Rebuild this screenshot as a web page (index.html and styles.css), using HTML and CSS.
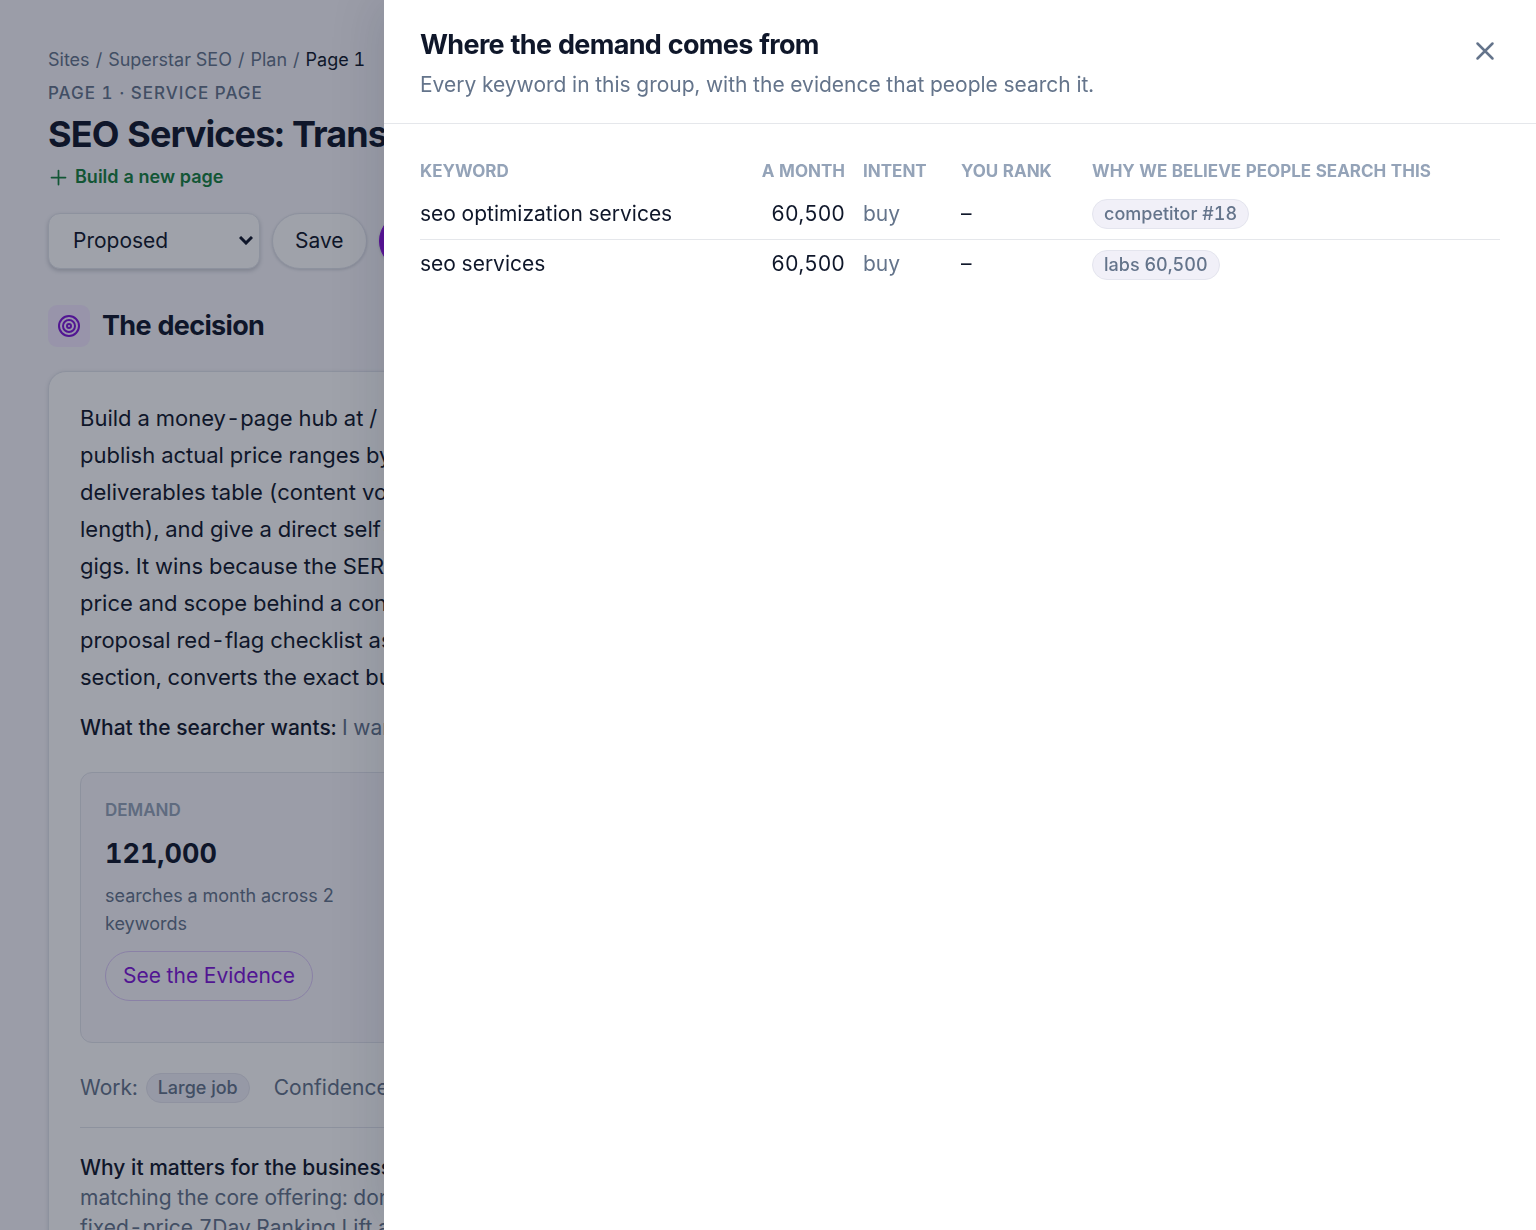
FILE: index.html
```html
<!DOCTYPE html>
<html lang="en">

<head>
    <meta charset="UTF-8">
    <meta name="viewport" content="width=device-width, initial-scale=1.0">
    <title>Page 1 - Superstar SEO</title>
    <link rel="stylesheet" href="styles.css">
</head>

<body>
    <main class="page">
        <nav class="breadcrumb" aria-label="Breadcrumb">
            <a href="#">Sites</a>
            <span>/</span>
            <a href="#">Superstar SEO</a>
            <span>/</span>
            <a href="#">Plan</a>
            <span>/</span>
            <span class="current">Page 1</span>
        </nav>
        <div class="eyebrow">Page 1 · Service page</div>
        <h1>SEO Services: Transparent</h1>
        <div class="build-type">
            <svg width="21" height="21" viewBox="0 0 24 24" fill="none" stroke="currentColor" stroke-width="2"
                stroke-linecap="round" stroke-linejoin="round">
                <path d="M4 12h16M12 4v16"></path>
            </svg>
            Build a new page
        </div>

        <form class="actions">
            <div class="select-wrap">
                <select class="status" aria-label="Status">
                    <option>Proposed</option>
                </select>
                <svg class="select-arrow" width="14" height="9" viewBox="0 0 14 9" fill="none" stroke="currentColor"
                    stroke-width="3">
                    <path d="M1 1l6 6 6-6"></path>
                </svg>
            </div>
            <button type="button" class="btn">Save</button>
            <button type="button" class="btn btn-primary">Approve</button>
        </form>

        <div class="section-title">
            <span class="section-icon">
                <svg width="24" height="24" viewBox="0 0 24 24" fill="none" stroke="currentColor" stroke-width="2">
                    <circle cx="12" cy="12" r="10"></circle>
                    <circle cx="12" cy="12" r="6"></circle>
                    <circle cx="12" cy="12" r="2"></circle>
                </svg>
            </span>
            <h2>The decision</h2>
        </div>

        <section class="card">
            <p class="lead">
                Build a money-page hub at /<br>
                publish actual price ranges by<br>
                deliverables table (content vol<br>
                length), and give a direct self-<br>
                gigs. It wins because the SERP<br>
                price and scope behind a cont<br>
                proposal red-flag checklist as<br>
                section, converts the exact bu
            </p>
            <p class="wants"><strong>What the searcher wants:</strong> I want</p>

            <div class="stat">
                <div class="stat-label">Demand</div>
                <div class="stat-value">121,000</div>
                <div class="stat-note">searches a month across 2<br>keywords</div>
                <button type="button" class="evidence">See the Evidence</button>
            </div>

            <div class="meta">
                <div class="meta-item">Work: <span class="tag">Large job</span></div>
                <div class="meta-item">Confidence:</div>
            </div>

            <p class="why">
                <strong>Why it matters for the business:</strong><br>
                matching the core offering: done<br>
                fixed-price 7Day Ranking Lift an
            </p>
        </section>
    </main>

    <div class="overlay"></div>

    <aside class="drawer" role="dialog" aria-labelledby="drawer-title">
        <header class="drawer-header">
            <div>
                <h2 id="drawer-title">Where the demand comes from</h2>
                <p>Every keyword in this group, with the evidence that people search it.</p>
            </div>
            <button type="button" class="close" aria-label="Close">
                <svg width="30" height="30" viewBox="0 0 24 24" fill="none" stroke="currentColor" stroke-width="2"
                    stroke-linecap="round">
                    <path d="M6 6l12 12M18 6L6 18"></path>
                </svg>
            </button>
        </header>
        <div class="drawer-body">
            <table>
                <colgroup>
                    <col>
                    <col class="col-month">
                    <col class="col-intent">
                    <col class="col-rank">
                    <col class="col-why">
                </colgroup>
                <thead>
                    <tr>
                        <th>Keyword</th>
                        <th class="num">A month</th>
                        <th>Intent</th>
                        <th>You rank</th>
                        <th>Why we believe people search this</th>
                    </tr>
                </thead>
                <tbody>
                    <tr>
                        <td>seo optimization services</td>
                        <td class="num">60,500</td>
                        <td class="muted">buy</td>
                        <td>–</td>
                        <td><span class="tag">competitor #18</span></td>
                    </tr>
                    <tr>
                        <td>seo services</td>
                        <td class="num">60,500</td>
                        <td class="muted">buy</td>
                        <td>–</td>
                        <td><span class="tag">labs 60,500</span></td>
                    </tr>
                </tbody>
            </table>
        </div>
    </aside>
</body>
</html>
```
FILE: styles.css
```css
* {
    box-sizing: border-box;
}

body {
    margin: 0;
    height: 100vh;
    overflow: hidden;
    font-family: Inter, sans-serif;
    font-size: 21px;
    line-height: 30px;
    font-variant-numeric: tabular-nums;
    color: #0f172a;
    background-color: #f8f7fc;
}

h1,
h2,
p {
    margin: 0;
}

strong {
    font-weight: 500;
}

button,
select {
    font: inherit;
    font-variant-numeric: inherit;
    color: inherit;
    cursor: pointer;
}

.page {
    height: 100vh;
    overflow: hidden;
    padding: 46px 48px 0;
    white-space: nowrap;
}

.breadcrumb {
    display: flex;
    gap: 6px;
    font-size: 18px;
    line-height: 28px;
    color: #64748b;
}

.breadcrumb a {
    color: inherit;
    text-decoration: none;
}

.breadcrumb .current {
    color: #0f172a;
}

.eyebrow {
    margin-top: 5px;
    font-size: 17px;
    line-height: 28px;
    font-weight: 500;
    letter-spacing: 1px;
    text-transform: uppercase;
    color: #64748b;
}

h1 {
    margin-top: 5px;
    font-size: 36px;
    line-height: 44px;
    font-weight: 700;
    letter-spacing: -0.025em;
}

.build-type {
    display: flex;
    align-items: center;
    gap: 6px;
    margin-top: 7px;
    font-size: 18px;
    line-height: 28px;
    font-weight: 600;
    color: #15803d;
}

.actions {
    display: flex;
    gap: 12px;
    margin-top: 22px;
}

.select-wrap {
    position: relative;
}

.status {
    appearance: none;
    width: 212px;
    height: 56px;
    padding: 0 24px;
    border: 1px solid #e2e4ec;
    border-radius: 12px;
    background-color: #fff;
    box-shadow: 0 2px 4px rgba(15, 23, 42, 0.2);
}

.select-arrow {
    position: absolute;
    right: 7px;
    top: 23px;
    pointer-events: none;
}

.btn {
    height: 56px;
    padding: 0 22px;
    border: 1px solid #e2e4ec;
    border-radius: 28px;
    background-color: #fff;
    box-shadow: 0 1px 3px rgba(15, 23, 42, 0.16);
}

.btn-primary {
    border-color: #8a10e0;
    background-color: #8a10e0;
    color: #fff;
}

.section-title {
    display: flex;
    align-items: center;
    gap: 12px;
    margin-top: 36px;
}

.section-icon {
    display: flex;
    align-items: center;
    justify-content: center;
    width: 42px;
    height: 42px;
    border-radius: 9px;
    background-color: #f3e8ff;
    color: #7e14d8;
}

.section-title h2,
.drawer-header h2 {
    font-size: 27px;
    line-height: 36px;
    font-weight: 700;
    letter-spacing: -0.025em;
}

.card {
    margin-top: 24px;
    padding: 28px 31px;
    border: 1px solid #e2e4ec;
    border-radius: 18px;
    background-color: #fff;
    box-shadow: 0 1px 4px rgba(15, 23, 42, 0.12);
}

.lead {
    font-size: 22px;
    line-height: 37px;
}

.wants {
    margin-top: 17px;
    color: #64748b;
}

.wants strong,
.why strong {
    color: #0f172a;
}

.stat {
    margin-top: 29px;
    padding: 22px 24px 41px;
    border: 1px solid #e2e4ec;
    border-radius: 12px;
    background-color: #f8f7fc;
}

.stat-label {
    font-size: 17px;
    line-height: 30px;
    font-weight: 600;
    text-transform: uppercase;
    color: #94a3b8;
}

.stat-value {
    margin-top: 11px;
    font-size: 27px;
    line-height: 36px;
    font-weight: 700;
}

.stat-note {
    margin-top: 10px;
    font-size: 18px;
    line-height: 28px;
    color: #64748b;
}

.evidence {
    height: 50px;
    margin-top: 13px;
    padding: 0 17px;
    border: 1px solid #dcc8f8;
    border-radius: 25px;
    background: none;
    color: #7e14d8;
}

.meta {
    display: flex;
    align-items: center;
    gap: 24px;
    padding: 30px 0 24px;
    border-bottom: 1px solid #e2e4ec;
    color: #64748b;
}

.meta-item {
    display: flex;
    align-items: center;
    gap: 8px;
}

.tag {
    display: inline-block;
    padding: 0 11px;
    border: 1px solid #e4e5ee;
    border-radius: 15px;
    background-color: #f1f0f8;
    font-size: 18px;
    line-height: 28px;
    font-weight: 500;
    vertical-align: middle;
    color: #64748b;
}

.why {
    margin-top: 25px;
    color: #64748b;
}

/* drawer */
.overlay {
    position: fixed;
    inset: 0;
    background-color: rgba(15, 23, 42, 0.4);
}

.drawer {
    position: fixed;
    top: 0;
    right: 0;
    bottom: 0;
    width: 75%;
    background-color: #fff;
    box-shadow: -6px 0 48px rgba(15, 23, 42, 0.12);
}

.drawer-header {
    display: flex;
    justify-content: space-between;
    align-items: flex-start;
    padding: 27px 36px 23px;
    border-bottom: 1px solid #e5e7eb;
}

.drawer-header p {
    margin-top: 7px;
    color: #64748b;
}

.close {
    display: flex;
    margin-top: 9px;
    padding: 0;
    border: 0;
    background: none;
    color: #64748b;
}

.drawer-body {
    padding: 31px 36px;
}

table {
    width: 100%;
    table-layout: fixed;
    border-collapse: collapse;
}

.col-month {
    width: 120px;
}

.col-intent {
    width: 98px;
}

.col-rank {
    width: 131px;
}

.col-why {
    width: 408px;
}

th {
    padding: 0 18px 1px 0;
    font-size: 17px;
    line-height: 33px;
    font-weight: 700;
    text-align: left;
    text-transform: uppercase;
    white-space: nowrap;
    color: #94a3b8;
}

td {
    height: 50px;
    padding: 0 18px 0 0;
    border-bottom: 1px solid #e5e7eb;
}

tbody tr:last-child td {
    border-bottom: 0;
}

th.num,
td.num {
    text-align: right;
}

td.muted {
    color: #64748b;
}
```
